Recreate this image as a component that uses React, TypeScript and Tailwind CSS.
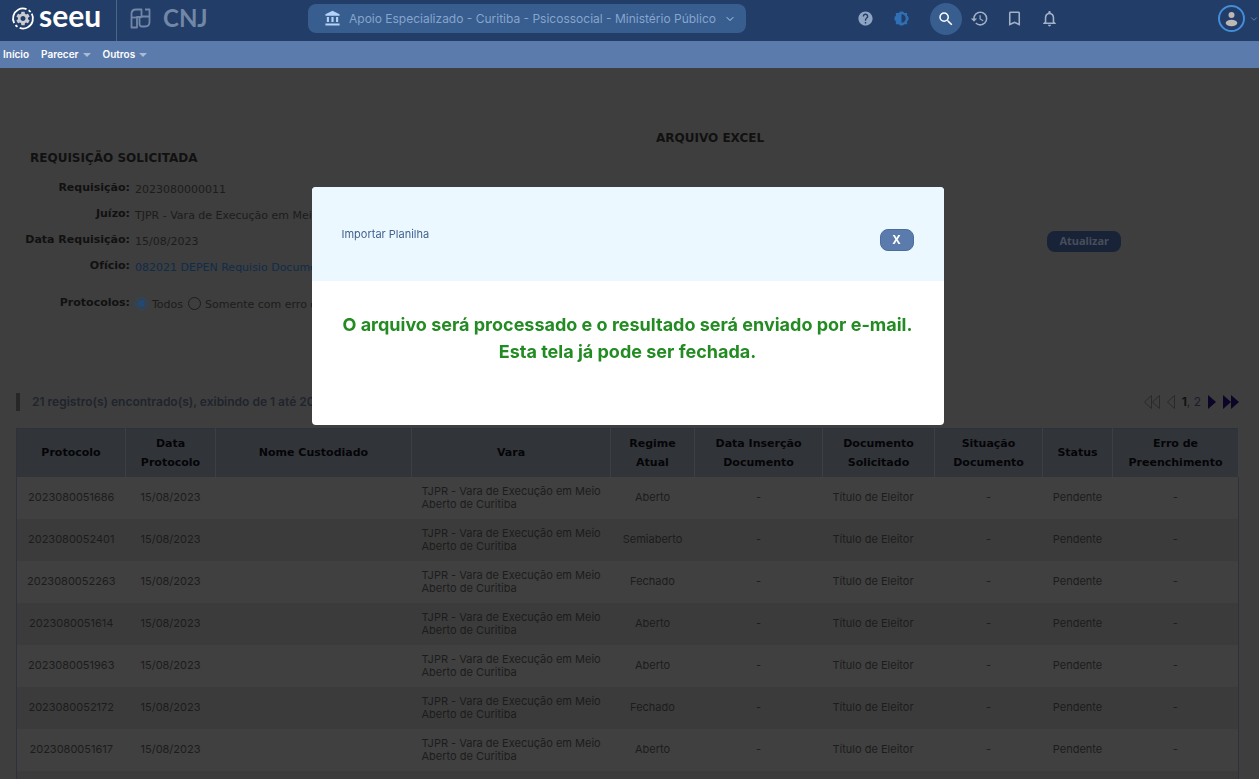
import {
  MdAccountBalance,
  MdBookmarkBorder,
  MdHelp,
  MdHistory,
  MdNotificationsNone,
  MdSearch,
  MdSettings,
} from "react-icons/md"
import { ChevronDown } from "lucide-react"

const menu = [
  { label: "Início", sub: false },
  { label: "Parecer", sub: true },
  { label: "Outros", sub: true },
]

const columns = [
  { label: "Protocolo", width: "w-[109px]" },
  { label: "Data Protocolo", width: "w-[90px]" },
  { label: "Nome Custodiado", width: "w-[196px]" },
  { label: "Vara", width: "" },
  { label: "Regime Atual", width: "w-[84px]" },
  { label: "Data Inserção Documento", width: "w-[128px]" },
  { label: "Documento Solicitado", width: "w-[112px]" },
  { label: "Situação Documento", width: "w-[108px]" },
  { label: "Status", width: "w-[70px]" },
  { label: "Erro de Preenchimento", width: "w-[126px]" },
]

const rows = [
  { protocolo: "2023080051686", regime: "Aberto" },
  { protocolo: "2023080052401", regime: "Semiaberto" },
  { protocolo: "2023080052263", regime: "Fechado" },
  { protocolo: "2023080051614", regime: "Aberto" },
  { protocolo: "2023080051963", regime: "Aberto" },
  { protocolo: "2023080052172", regime: "Fechado" },
  { protocolo: "2023080051617", regime: "Aberto" },
]

function SeeuLogo() {
  return (
    <a href="#" aria-label="seeu" className="flex h-full w-[117px] items-start border-r border-[#4f6588] pl-3">
      <svg width="100" height="41" viewBox="0 0 100 41" className="shrink-0 overflow-visible">
        <circle
          cx="11"
          cy="18.500"
          r="10"
          fill="none"
          stroke="#fff"
          strokeWidth="1.800"
          strokeDasharray="24 2.400 2.600 2.400"
          transform="rotate(-29 11 18.500)"
        />
        <g transform="translate(2.600 10.100) scale(0.700)">
          <MdSettings size={24} color="#c9ccd2" />
        </g>
        <text x="27" y="27" fill="#fff" fontSize="30" fontWeight="700" className="font-['Lato',sans-serif]">seeu</text>
      </svg>
    </a>
  )
}

function CnjLogo() {
  return (
    <a href="#" aria-label="CNJ" className="flex items-start pl-3">
      <svg width="84" height="41" viewBox="0 0 84 41" className="shrink-0">
        <g fill="none" stroke="#7187a6" strokeWidth="1.800" strokeLinejoin="round">
          <path d="M2.500 27.500V14q0-4.500 4.500-4.500h5.500V17H8v10.500z" />
          <path d="M8 17.500h-5" />
          <path d="M12.500 16.500h8M16 9.500h4.500V22q0 4.500-4.500 4.500h-3q-2.500 0-2.500-2.500v-6" />
        </g>
        <text x="34" y="27" fill="#7187a6" fontSize="24" fontWeight="700" className="font-['Lato',sans-serif]">CNJ</text>
      </svg>
    </a>
  )
}

function ContrastIcon() {
  return (
    <svg width="15" height="15" viewBox="0 0 16 16" fill="currentColor" fillRule="evenodd">
      <path d="M6.500.500h3L11 2h3v3l1.500 1.500v3L14 11v3h-3l-1.500 1.500h-3L5 14H2v-3L.500 9.500v-3L2 5V2h3zM8 3.500v9a4.500 4.500 0 0 0 0-9z" />
    </svg>
  )
}

function Header() {
  return (
    <header className="flex h-[41px] items-center overflow-hidden bg-[#223d67]">
      <div className="flex h-full w-[308px] shrink-0">
        <SeeuLogo />
        <CnjLogo />
      </div>
      <button className="mb-1 flex h-[29px] shrink-0 items-center gap-2 rounded-lg bg-[#385d8f] pr-[10px] pl-4 text-xs text-[#86a5cd]">
        <MdAccountBalance size={17} className="text-[#b3d3f8]" />
        Apoio Especializado - Curitiba - Psicossocial - Ministério Público
        <ChevronDown size={12} className="text-[#b3d3f8]" />
      </button>
      <div className="flex flex-1 items-center pb-1">
        <div className="ml-auto flex items-center">
          <button aria-label="Ajuda" className="text-[#8ea4c3]"><MdHelp size={17} /></button>
          <button aria-label="Contraste" className="ml-5 text-[#2f6fb5]"><ContrastIcon /></button>
          <button aria-label="Pesquisar" className="ml-[21px] flex size-8 items-center justify-center rounded-full bg-[#385d8f] text-white">
            <MdSearch size={18} />
          </button>
          <button aria-label="Histórico" className="ml-2 text-[#a3b1c6]"><MdHistory size={19} /></button>
          <button aria-label="Favoritos" className="ml-4 text-[#a3b1c6]"><MdBookmarkBorder size={19} /></button>
          <button aria-label="Notificações" className="ml-4 text-[#a3b1c6]"><MdNotificationsNone size={19} /></button>
        </div>
        <button aria-label="Perfil" className="ml-[159px] flex items-center gap-1 text-[#bcbcbc]">
          <svg width="27" height="27" viewBox="0 0 27 27" fill="#bcb8b8">
            <circle cx="13.500" cy="13.500" r="12.500" fill="none" stroke="#438ddb" strokeWidth="2" />
            <circle cx="13.500" cy="10" r="3" />
            <ellipse cx="13.500" cy="18" rx="5.800" ry="3.200" />
          </svg>
          <ChevronDown size={10} className="text-[#6c87ae]" />
        </button>
      </div>
    </header>
  )
}

function Field({ label, children }: { label: string; children: React.ReactNode }) {
  return (
    <div className="flex h-[26px] items-center gap-[5px]">
      <dt className="w-[114px] pb-1 text-right font-bold text-[#111]">{label}</dt>
      <dd className="whitespace-nowrap">{children}</dd>
    </div>
  )
}

const radio =
  "mb-1 size-[13px] appearance-none rounded-full border border-[#1c1c1c] bg-clip-content p-[2px] checked:border-[#1f4a78] checked:bg-[#1f4a78]"

function Request() {
  return (
    <section className="flex pt-[60px] text-[11px] text-[#1c1c1c]">
      <div className="flex-1 pt-5">
        <h2 className="pl-[14px] text-xs leading-5 font-bold text-[#111]">REQUISIÇÃO SOLICITADA</h2>
        <dl className="mt-[9px]">
          <Field label="Requisição:">2023080000011</Field>
          <Field label="Juízo:">TJPR - Vara de Execução em Meio Aberto de Curitiba</Field>
          <Field label="Data Requisição:">15/08/2023</Field>
          <Field label="Ofício:">
            <a href="#" className="text-[#0f2c4a]">082021 DEPEN Requisio Documentos</a>
          </Field>
        </dl>
        <fieldset className="mt-[11px] flex h-[26px] items-center gap-[5px]">
          <legend className="float-left w-[114px] pb-1 text-right font-bold text-[#111]">Protocolos:</legend>
          <label className="flex items-center gap-1">
            <input type="radio" name="protocolos" defaultChecked className={radio} />
            Todos
          </label>
          <label className="flex items-center gap-1 whitespace-nowrap">
            <input type="radio" name="protocolos" className={radio} />
            Somente com erro de preenchimento
          </label>
        </fieldset>
      </div>
      <div className="w-[583px]">
        <h2 className="text-xs leading-5 font-bold text-[#111]">ARQUIVO EXCEL</h2>
        <div className="mt-[83px] mr-[118px] flex justify-end">
          <button className="h-[21px] rounded-lg bg-[#182338] px-3 font-['Noto_Sans',sans-serif] font-bold text-[#474e5b]">
            Atualizar
          </button>
        </div>
      </div>
    </section>
  )
}

function Pager() {
  return (
    <nav aria-label="Páginas" className="flex items-center gap-[7px] text-xs text-[#1c1c2c]">
      <button aria-label="Primeira" disabled>
        <svg width="16" height="14" fill="none" stroke="#292929"><path d="M7.500.500v13L.500 7zM15.500.500v13L8.500 7z" /></svg>
      </button>
      <button aria-label="Anterior" disabled>
        <svg width="8" height="14" fill="none" stroke="#292929"><path d="M7.500.500v13L.500 7z" /></svg>
      </button>
      <span><b className="text-[#111]">1</b>, <a href="#">2</a></span>
      <button aria-label="Próxima">
        <svg width="8" height="14" fill="#0c0527"><path d="M0 0v14l8-7z" /></svg>
      </button>
      <button aria-label="Última">
        <svg width="16" height="14" fill="#0c0527"><path d="M0 0v14l8-7zM8 0v14l8-7z" /></svg>
      </button>
    </nav>
  )
}

function Results() {
  return (
    <section className="mt-[75px] font-['Inter',sans-serif]">
      <div className="flex items-center justify-between">
        <p className="border-l-4 border-[#272727] pl-3 text-xs leading-[18px] font-semibold text-[#20242d]">
          21 registro(s) encontrado(s), exibindo de 1 até 20
        </p>
        <Pager />
      </div>
      <table className="mt-[17px] w-full table-fixed border-collapse border border-[#30303c] text-center text-[11px] text-[#1c1c1c]">
        <thead className="bg-[#313439] font-['DejaVu_Sans',sans-serif] text-[#050508]">
          <tr className="h-12">
            {columns.map((c) => (
              <th key={c.label} className={`${c.width} border-r border-[#3c3f43] px-2 leading-[19px] font-bold`}>
                {c.label}
              </th>
            ))}
          </tr>
        </thead>
        <tbody>
          {rows.map((r) => (
            <tr key={r.protocolo} className="h-[42px] bg-[#404040] even:bg-[#3b3b3b]">
              <td>{r.protocolo}</td>
              <td>15/08/2023</td>
              <td></td>
              <td className="pr-1 pl-[10px] text-left leading-[13px]">TJPR - Vara de Execução em Meio Aberto de Curitiba</td>
              <td>{r.regime}</td>
              <td>-</td>
              <td className="pl-[10px] text-left">Título de Eleitor</td>
              <td>-</td>
              <td>Pendente</td>
              <td>-</td>
            </tr>
          ))}
          <tr className="h-[42px] bg-[#3b3b3b]">
            <td colSpan={10}></td>
          </tr>
        </tbody>
      </table>
    </section>
  )
}

function ImportDialog() {
  return (
    <div
      role="dialog"
      aria-labelledby="import-title"
      className="fixed top-[187px] right-1 left-0 mx-auto h-[238px] w-[632px] max-w-full overflow-hidden rounded bg-white font-['Inter',sans-serif]"
    >
      <div className="flex h-[94px] items-center justify-between bg-[#ecf8ff] px-[30px]">
        <h1 id="import-title" className="text-[11px] text-[#42618f]">Importar Planilha</h1>
        <button className="mt-3 flex h-[22px] w-[34px] items-center justify-center rounded-lg border border-[#4d6d9f] bg-[#5b7bad] font-['Noto_Sans',sans-serif] text-xs font-bold text-white">
          X
        </button>
      </div>
      <p className="pt-[30px] text-center text-lg leading-[27px] font-bold text-[#228b22]">
        O arquivo será processado e o resultado será enviado por e-mail.
        <br />
        Esta tela já pode ser fechada.
      </p>
    </div>
  )
}

export default function App() {
  return (
    <div className="h-screen overflow-hidden bg-[#3e3e3e] font-['Inter',sans-serif]">
      <Header />
      <nav className="flex h-[27px] items-center gap-3 bg-[#5b7bad] px-[3px] text-[10px] font-semibold text-white">
        {menu.map((m) => (
          <a key={m.label} href="#" className="flex items-center gap-1">
            {m.label}
            {m.sub && (
              <svg width="8" height="4" fill="#a9bbd6"><path d="M0 0h8L4 4z" /></svg>
            )}
          </a>
        ))}
      </nav>
      <main className="pr-5 pl-4 font-['DejaVu_Sans',sans-serif]">
        <Request />
        <Results />
      </main>
      <ImportDialog />
    </div>
  )
}
